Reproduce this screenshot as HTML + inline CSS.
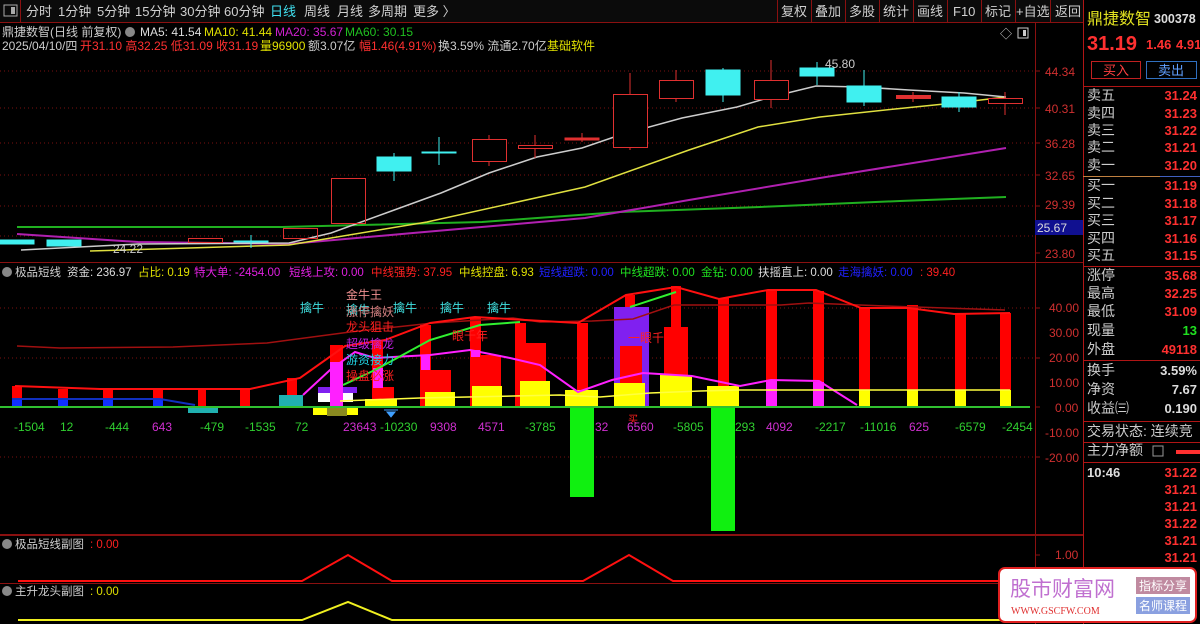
<!DOCTYPE html>
<html><head><meta charset="utf-8"><style>
html,body{margin:0;padding:0;background:#000;width:1200px;height:624px;overflow:hidden}
svg{display:block}
</style></head><body>
<svg width="1200" height="624" viewBox="0 0 1200 624" xmlns="http://www.w3.org/2000/svg" font-family="Liberation Sans, Noto Sans CJK SC, sans-serif" font-size="12">
<rect width="1200" height="624" fill="#000"/>
<rect x="0" y="0" width="1083" height="22" fill="#0b0b0b"/>
<line x1="0" y1="22.5" x2="1083" y2="22.5" stroke="#8a1010"/>
<rect x="4" y="5" width="13" height="11" fill="none" stroke="#aaa"/><rect x="11" y="7" width="4" height="7" fill="#aaa"/>
<line x1="20.5" y1="0" x2="20.5" y2="22" stroke="#8a1010"/>
<g fill="#d0d0d0" font-size="13">
<text x="26" y="16">分时</text><text x="58" y="16">1分钟</text><text x="97" y="16">5分钟</text><text x="135" y="16">15分钟</text><text x="180" y="16">30分钟</text><text x="224" y="16">60分钟</text><text x="270" y="16" fill="#40e0f0">日线</text><text x="304" y="16">周线</text><text x="337" y="16">月线</text><text x="368" y="16">多周期</text><text x="413" y="16">更多 〉</text>
<text x="781" y="16">复权</text><text x="815" y="16">叠加</text><text x="849" y="16">多股</text><text x="883" y="16">统计</text><text x="917" y="16">画线</text><text x="953" y="16">F10</text><text x="985" y="16">标记</text><text x="1016" y="16">+自选</text><text x="1055" y="16">返回</text>
</g>
<g stroke="#8a1010"><line x1="777.5" y1="0" x2="777.5" y2="22"/><line x1="811.5" y1="0" x2="811.5" y2="22"/><line x1="845.5" y1="0" x2="845.5" y2="22"/><line x1="879.5" y1="0" x2="879.5" y2="22"/><line x1="913.5" y1="0" x2="913.5" y2="22"/><line x1="947.5" y1="0" x2="947.5" y2="22"/><line x1="981.5" y1="0" x2="981.5" y2="22"/><line x1="1015.5" y1="0" x2="1015.5" y2="22"/><line x1="1050.5" y1="0" x2="1050.5" y2="22"/></g>
<line x1="1035.5" y1="22" x2="1035.5" y2="624" stroke="#8a1010"/>
<line x1="1083.5" y1="0" x2="1083.5" y2="624" stroke="#b01515"/>
<line x1="0" y1="262.5" x2="1083" y2="262.5" stroke="#8a1010"/>
<line x1="0" y1="535" x2="1083" y2="535" stroke="#8a1010" stroke-width="2"/>
<line x1="0" y1="583.5" x2="1083" y2="583.5" stroke="#8a1010"/>
<text x="2" y="36" fill="#ccc">鼎捷数智(日线 前复权)</text>
<circle cx="130" cy="32" r="5" fill="#888"/>
<text x="140" y="36" fill="#ddd">MA5: 41.54</text><text x="204" y="36" fill="#e0e000">MA10: 41.44</text><text x="275" y="36" fill="#d020d0">MA20: 35.67</text><text x="345" y="36" fill="#20c020">MA60: 30.15</text>
<text x="2" y="50" fill="#ccc">2025/04/10/四</text>
<text x="80" y="50" fill="#ff3030">开31.10 高32.25 低31.09 收31.19</text>
<text x="260" y="50" fill="#e0e000">量96900</text><text x="308" y="50" fill="#ccc">额3.07亿</text><text x="359" y="50" fill="#ff3030">幅1.46(4.91%)</text><text x="438" y="50" fill="#ccc">换3.59% 流通2.70亿</text><text x="547" y="50" fill="#e0e000">基础软件</text>
<text x="1000" y="38" fill="#ccc">◇</text><rect x="1018" y="28" width="10" height="10" fill="none" stroke="#ccc"/><rect x="1023" y="30" width="3" height="6" fill="#ccc"/>
<g stroke="#7a1010" stroke-dasharray="1 3">
<line x1="0" y1="71" x2="1035" y2="71"/><line x1="0" y1="108" x2="1035" y2="108"/><line x1="0" y1="143" x2="1035" y2="143"/><line x1="0" y1="175" x2="1035" y2="175"/><line x1="0" y1="206" x2="1035" y2="206"/><line x1="0" y1="236" x2="1035" y2="236"/>
</g>
<g fill="#d03030"><text x="1045" y="76">44.34</text><text x="1045" y="113">40.31</text><text x="1045" y="148">36.28</text><text x="1045" y="180">32.65</text><text x="1045" y="209">29.39</text><text x="1045" y="258">23.80</text></g>
<rect x="1035" y="220" width="48" height="15" fill="#101090"/><text x="1037" y="232" fill="#ddd">25.67</text>
<g stroke="#8a1010"><line x1="1035" y1="71" x2="1040" y2="71"/><line x1="1035" y1="108" x2="1040" y2="108"/><line x1="1035" y1="143" x2="1040" y2="143"/><line x1="1035" y1="175" x2="1040" y2="175"/><line x1="1035" y1="206" x2="1040" y2="206"/><line x1="1035" y1="253" x2="1040" y2="253"/></g>
<polyline fill="none" stroke="#20b020" stroke-width="2" points="17,227 282,227 482,222 620,212 760,207 900,201 1006,197"/>
<polyline fill="none" stroke="#b020b0" stroke-width="2" points="17,234 138,242 289,244 413,233 585,218 689,200 826,177 1006,148"/>
<polyline fill="none" stroke="#e0e040" stroke-width="1.5" points="90,251 289,245 427,222 585,187 689,150 758,127 820,117 895,109 964,102 1006,97"/>
<polyline fill="none" stroke="#ccc" stroke-width="1.5" points="21,250 138,244 289,243 331,233 386,213 441,193 489,173 537,157 582,148 620,135 682,118 737,107 771,97 816,86 861,87 909,90 964,93 1006,97"/>
<g stroke="#40f0f0" fill="#40f0f0">
<rect x="0" y="240" width="34" height="4"/><rect x="47" y="240" width="34" height="6"/><line x1="251" y1="235" x2="251" y2="248"/><rect x="234" y="241" width="34" height="1"/>
<line x1="394" y1="153" x2="394" y2="181"/><rect x="377" y="157" width="34" height="14"/>
<line x1="439" y1="137" x2="439" y2="165"/><rect x="422" y="152" width="34" height="1"/>
<line x1="723" y1="68" x2="723" y2="102"/><rect x="706" y="70" width="34" height="25"/>
<line x1="817" y1="62" x2="817" y2="85"/><rect x="800" y="68" width="34" height="8"/>
<line x1="864" y1="70" x2="864" y2="106"/><rect x="847" y="86" width="34" height="16"/>
<line x1="959" y1="92" x2="959" y2="112"/><rect x="942" y="97" width="34" height="10"/>
</g>
<g stroke="#e03030" fill="none">
<rect x="188.5" y="238.5" width="34" height="4"/>
<rect x="283.5" y="228.5" width="34" height="10"/>
<rect x="331.5" y="178.5" width="34" height="45"/>
<line x1="489" y1="135" x2="489" y2="166"/><rect x="472.5" y="139.5" width="34" height="22" fill="#000"/>
<line x1="535" y1="135" x2="535" y2="158"/><rect x="518.5" y="145.5" width="34" height="3" fill="#000"/>
<line x1="582" y1="133" x2="582" y2="142"/><rect x="565" y="138" width="34" height="2" fill="#e03030"/>
<line x1="630" y1="73" x2="630" y2="150"/><rect x="613.5" y="94.5" width="34" height="53" fill="#000"/>
<line x1="676" y1="70" x2="676" y2="102"/><rect x="659.5" y="80.5" width="34" height="18" fill="#000"/>
<line x1="771" y1="60" x2="771" y2="108"/><rect x="754.5" y="80.5" width="34" height="19" fill="#000"/>
<line x1="913" y1="92" x2="913" y2="102"/><rect x="896.5" y="95.5" width="34" height="3" fill="#e03030"/>
<line x1="1005" y1="92" x2="1005" y2="115"/><rect x="988.5" y="98.5" width="34" height="5" fill="#000"/>
</g>
<text x="825" y="68" fill="#ccc">45.80</text><text x="113" y="253" fill="#ccc">24.22</text>
<circle cx="7" cy="272" r="5" fill="#888"/>
<g font-size="11.5"><text x="15" y="276" fill="#ccc">极品短线</text><text x="67" y="276" fill="#ddd">资金: 236.97</text><text x="138" y="276" fill="#e0e000">占比: 0.19</text><text x="194" y="276" fill="#e020e0">特大单: -2454.00</text><text x="289" y="276" fill="#e020e0">短线上攻: 0.00</text><text x="371" y="276" fill="#ff2020">中线强势: 37.95</text><text x="459" y="276" fill="#e0e000">中线控盘: 6.93</text><text x="539" y="276" fill="#2020ff">短线超跌: 0.00</text><text x="620" y="276" fill="#20e020">中线超跌: 0.00</text><text x="701" y="276" fill="#20e020">金钻: 0.00</text><text x="758" y="276" fill="#ddd">扶摇直上: 0.00</text><text x="838" y="276" fill="#2020ff">走海擒妖: 0.00</text><text x="920" y="276" fill="#ff2020">: 39.40</text></g>
<g stroke="#7a1010" stroke-dasharray="1 3"><line x1="0" y1="308" x2="1035" y2="308"/><line x1="0" y1="358" x2="1035" y2="358"/><line x1="0" y1="457" x2="1035" y2="457"/></g>
<g fill="#d03030"><text x="1049" y="312">40.00</text><text x="1049" y="337">30.00</text><text x="1049" y="362">20.00</text><text x="1049" y="387">10.00</text><text x="1055" y="412">0.00</text><text x="1045" y="437">-10.00</text><text x="1045" y="462">-20.00</text><text x="1055" y="559">1.00</text></g>
<g stroke="#8a1010"><line x1="1035" y1="308" x2="1040" y2="308"/><line x1="1035" y1="358" x2="1040" y2="358"/><line x1="1035" y1="407" x2="1040" y2="407"/><line x1="1035" y1="457" x2="1040" y2="457"/><line x1="1035" y1="555" x2="1040" y2="555"/></g>
<g fill="#ff0000">
<rect x="12" y="386" width="10" height="13"/><rect x="58" y="389" width="10" height="10"/><rect x="103" y="389" width="10" height="10"/><rect x="153" y="390" width="10" height="9"/>
<rect x="198" y="389" width="8" height="18"/><rect x="240" y="389" width="10" height="18"/><rect x="287" y="378" width="10" height="18"/>
<rect x="330" y="345" width="13" height="20"/>
<rect x="372" y="340" width="11" height="60"/><rect x="380" y="387" width="14" height="12"/>
<rect x="420" y="325" width="11" height="82"/><rect x="429" y="370" width="22" height="23"/>
<rect x="470" y="318" width="11" height="89"/><rect x="475" y="355" width="26" height="31"/>
<rect x="515" y="323" width="11" height="84"/><rect x="522" y="343" width="24" height="38"/>
<rect x="577" y="323" width="11" height="67"/>
<rect x="625" y="295" width="10" height="12"/>
<rect x="671" y="286" width="10" height="41"/><rect x="664" y="327" width="24" height="48"/>
<rect x="718" y="298" width="11" height="89"/>
<rect x="766" y="291" width="11" height="89"/><rect x="813" y="291" width="11" height="91"/>
<rect x="859" y="308" width="11" height="82"/><rect x="907" y="305" width="11" height="85"/><rect x="955" y="314" width="11" height="76"/><rect x="1000" y="313" width="11" height="77"/>
</g>
<g fill="#1030ff"><rect x="12" y="399" width="10" height="8"/><rect x="58" y="399" width="10" height="8"/><rect x="103" y="399" width="10" height="8"/><rect x="153" y="399" width="10" height="8"/></g>
<polyline fill="none" stroke="#1030c0" stroke-width="2" points="12,399 160,399 195,405"/>
<rect x="188" y="407" width="30" height="6" fill="#20b0b0"/><rect x="279" y="395" width="24" height="12" fill="#20b0b0"/>
<rect x="614" y="307" width="35" height="100" fill="#8020f0"/><rect x="620" y="346" width="22" height="37" fill="#ff0000"/>
<g fill="#ffff00">
<rect x="313" y="407" width="45" height="8"/><rect x="365" y="399" width="32" height="8"/><rect x="425" y="392" width="30" height="15"/><rect x="472" y="386" width="30" height="21"/><rect x="520" y="381" width="30" height="26"/><rect x="565" y="390" width="33" height="17"/><rect x="614" y="383" width="31" height="24"/><rect x="660" y="375" width="32" height="32"/><rect x="707" y="386" width="32" height="21"/>
<rect x="859" y="390" width="11" height="17"/><rect x="907" y="390" width="11" height="17"/><rect x="955" y="390" width="11" height="17"/><rect x="1000" y="390" width="11" height="17"/>
</g>
<rect x="327" y="407" width="20" height="9" fill="#8a8a20"/>
<rect x="318" y="387" width="39" height="6" fill="#8020f0"/><rect x="318" y="393" width="35" height="9" fill="#fff"/>
<rect x="330" y="362" width="13" height="45" fill="#ff20ff"/><rect x="373" y="368" width="10" height="20" fill="#ff20ff"/><rect x="421" y="355" width="9" height="15" fill="#ff20ff"/><rect x="471" y="350" width="9" height="7" fill="#ff20ff"/>
<rect x="766" y="380" width="11" height="27" fill="#ff20ff"/><rect x="813" y="382" width="11" height="25" fill="#ff20ff"/>
<rect x="570" y="407" width="24" height="90" fill="#10f010"/><rect x="711" y="407" width="24" height="124" fill="#10f010"/>
<line x1="0" y1="407" x2="1030" y2="407" stroke="#30c030" stroke-width="2"/>
<polyline fill="none" stroke="#a01010" stroke-width="1.5" points="17,346 60,348 173,347 267,343 350,332 433,323 513,318 540,322 592,321 633,319 674,305 781,305 809,303 885,306 1005,310"/>
<polyline fill="none" stroke="#ff1010" stroke-width="2" points="15,386 100,389 250,389 300,378 345,346 385,340 430,323 475,317 525,320 578,323 626,295 676,287 719,299 768,290 816,290 861,308 909,308 954,314 1010,313"/>
<polyline fill="none" stroke="#ff20ff" stroke-width="2" points="303,395 330,370 355,352 375,358 430,355 470,350 510,358 540,365 578,392 612,380 643,373 692,376 740,386 771,380 819,381 857,405"/>
<polyline fill="none" stroke="#30f030" stroke-width="2" points="343,385 375,370 430,340 480,325 520,322"/>
<polyline fill="none" stroke="#30f030" stroke-width="2" points="630,307 676,292"/>
<polyline fill="none" stroke="#ffff40" stroke-width="1.5" points="340,401 420,398 560,395 600,397 650,393 700,391 740,390 1010,390"/>
<path d="M387,412 l8,0 l-4,5z M384,410 l14,0" stroke="#40a0ff" fill="#40a0ff"/>
<g font-size="12"><text x="300" y="312" fill="#40e0e0">擒牛</text><text x="393" y="312" fill="#40e0e0">擒牛</text><text x="440" y="312" fill="#40e0e0">擒牛</text><text x="487" y="312" fill="#40e0e0">擒牛</text>
<text x="346" y="299" fill="#f09090">金牛王</text><text x="346" y="314" fill="#40e0e0">擒牛</text><text x="346" y="316" fill="#d08080">涨停擒妖</text><text x="346" y="331" fill="#ff2020">龙头狙击</text><text x="346" y="348" fill="#c020e0">超级擒龙</text><text x="346" y="364" fill="#20d0e0">游资接力</text><text x="346" y="380" fill="#ff2020">操盘必涨</text>
<text x="452" y="340" fill="#ff2020">眼千年</text><text x="628" y="342" fill="#ff2020">一眼千</text><text x="628" y="423" fill="#ff2020" font-size="10">买</text></g>
<g font-size="12" fill="#30d030"><text x="14" y="431">-1504</text><text x="60" y="431">12</text><text x="105" y="431">-444</text><text x="152" y="431" fill="#d030d0">643</text><text x="200" y="431">-479</text><text x="245" y="431">-1535</text><text x="295" y="431">72</text><text x="343" y="431" fill="#d030d0">23643</text><text x="380" y="431">-10230</text><text x="430" y="431" fill="#d030d0">9308</text><text x="478" y="431" fill="#d030d0">4571</text><text x="525" y="431">-3785</text><text x="595" y="431" fill="#d030d0">32</text><text x="627" y="431" fill="#d030d0">6560</text><text x="673" y="431">-5805</text><text x="735" y="431">293</text><text x="766" y="431" fill="#d030d0">4092</text><text x="815" y="431">-2217</text><text x="860" y="431">-11016</text><text x="909" y="431" fill="#d030d0">625</text><text x="955" y="431">-6579</text><text x="1002" y="431">-2454</text></g>
<circle cx="7" cy="544" r="5" fill="#888"/><text x="15" y="548" fill="#ccc" font-size="11.5">极品短线副图</text><text x="90" y="548" fill="#ff2020" font-size="11.5">: 0.00</text>
<polyline fill="none" stroke="#ff1010" stroke-width="2" points="18,581 302,581 348,555 392,581 583,581 629,555 673,581 1030,581"/>
<circle cx="7" cy="591" r="5" fill="#888"/><text x="15" y="595" fill="#ccc" font-size="11.5">主升龙头副图</text><text x="90" y="595" fill="#e0e000" font-size="11.5">: 0.00</text>
<polyline fill="none" stroke="#f0f020" stroke-width="2" points="18,620 302,620 348,602 392,620 1030,620"/>
<text x="1087" y="24" fill="#e0e020" font-size="16">鼎捷数智</text><text x="1154" y="23" fill="#ddd" font-size="12.5" font-weight="bold">300378</text>
<text x="1087" y="50" fill="#ff3030" font-size="20" font-weight="bold">31.19</text><text x="1146" y="49" fill="#ff3030" font-size="13" font-weight="bold">1.46</text><text x="1176" y="49" fill="#ff3030" font-size="13" font-weight="bold">4.91%</text>
<rect x="1091.5" y="61.5" width="49" height="17" fill="none" stroke="#c02020"/><text x="1103" y="75" fill="#ff4040" font-size="13">买入</text>
<rect x="1146.5" y="61.5" width="50" height="17" fill="none" stroke="#3070c0"/><text x="1158" y="75" fill="#60a0ff" font-size="13">卖出</text>
<line x1="1083" y1="86.5" x2="1200" y2="86.5" stroke="#b01515"/>
<g font-size="14" fill="#ccc"><text x="1087" y="100">卖五</text><text x="1087" y="118">卖四</text><text x="1087" y="135">卖三</text><text x="1087" y="152">卖二</text><text x="1087" y="170">卖一</text><text x="1087" y="190">买一</text><text x="1087" y="208">买二</text><text x="1087" y="225">买三</text><text x="1087" y="243">买四</text><text x="1087" y="260">买五</text><text x="1087" y="280">涨停</text><text x="1087" y="298">最高</text><text x="1087" y="316">最低</text><text x="1087" y="335">现量</text><text x="1087" y="354">外盘</text><text x="1087" y="375">换手</text><text x="1087" y="394">净资</text><text x="1087" y="413">收益㈢</text><text x="1087" y="436">交易状态: 连续竞</text><text x="1087" y="455">主力净额</text></g>
<g font-size="13" fill="#ff3030" font-weight="bold" text-anchor="end"><text x="1197" y="100">31.24</text><text x="1197" y="118">31.23</text><text x="1197" y="135">31.22</text><text x="1197" y="152">31.21</text><text x="1197" y="170">31.20</text><text x="1197" y="190">31.19</text><text x="1197" y="208">31.18</text><text x="1197" y="225">31.17</text><text x="1197" y="243">31.16</text><text x="1197" y="260">31.15</text><text x="1197" y="280">35.68</text><text x="1197" y="298">32.25</text><text x="1197" y="316">31.09</text><text x="1197" y="335" fill="#20e020">13</text><text x="1197" y="354">49118</text><text x="1197" y="375" fill="#ddd">3.59%</text><text x="1197" y="394" fill="#ddd">7.67</text><text x="1197" y="413" fill="#ddd">0.190</text>
<text x="1197" y="477">31.22</text><text x="1197" y="494">31.21</text><text x="1197" y="511">31.21</text><text x="1197" y="528">31.22</text><text x="1197" y="545">31.21</text><text x="1197" y="562">31.21</text><text x="1197" y="580">31.21</text></g>
<text x="1087" y="477" fill="#ddd" font-size="13" font-weight="bold">10:46</text>
<rect x="1153" y="446" width="10" height="10" fill="none" stroke="#999"/>
<rect x="1176" y="450" width="24" height="4" fill="#ff3030"/>
<line x1="1083" y1="176.5" x2="1200" y2="176.5" stroke="#c08040"/><line x1="1160" y1="176.5" x2="1200" y2="176.5" stroke="#4060c0"/>
<g stroke="#b01515"><line x1="1083" y1="266.5" x2="1200" y2="266.5"/><line x1="1083" y1="360.5" x2="1200" y2="360.5"/><line x1="1083" y1="421.5" x2="1200" y2="421.5"/><line x1="1083" y1="442.5" x2="1200" y2="442.5"/><line x1="1083" y1="462.5" x2="1200" y2="462.5"/></g>
<rect x="999" y="568" width="197" height="54" rx="6" fill="#fff" stroke="#e02020" stroke-width="2"/>
<text x="1010" y="596" fill="#c070d0" font-size="21">股市财富网</text>
<text x="1011" y="614" fill="#e03030" font-size="10" font-family="Liberation Serif, serif">WWW.GSCFW.COM</text>
<rect x="1136" y="577" width="54" height="17" fill="#c08aa0"/><text x="1139" y="590" fill="#fff" font-size="12">指标分享</text>
<rect x="1136" y="597" width="54" height="17" fill="#8aa0e0"/><text x="1139" y="610" fill="#fff" font-size="12">名师课程</text>
</svg>
</body></html>
